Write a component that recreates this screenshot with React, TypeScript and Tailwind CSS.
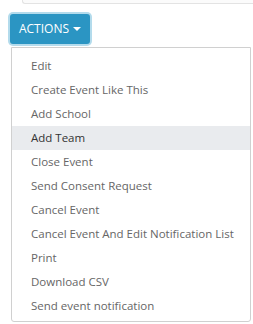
const items = [
  'Edit',
  'Create Event Like This',
  'Add School',
  'Add Team',
  'Close Event',
  'Send Consent Request',
  'Cancel Event',
  'Cancel Event And Edit Notification List',
  'Print',
  'Download CSV',
  'Send event notification',
];

function App() {
  const active = 'Add Team';

  return (
    <div className="relative h-[324px] w-[253px] overflow-hidden bg-white font-['Open_Sans',sans-serif]">
      <div className="ml-[22px] h-[4px] rounded-bl-[3px] border-b border-l border-[#e3e3e3] bg-[#fbfbfb]" />

      <div className="ml-[10px] mt-[10px] flex">
        <button className="flex h-[30px] w-[80px] items-center justify-center gap-[4px] rounded-[3px] bg-[#2b95c3] text-[12px] text-white shadow-[0_0_0_2px_#b3dbec]">
          ACTIONS
          <span className="h-0 w-0 border-x-[4px] border-t-[4px] border-x-transparent border-t-white" />
        </button>
      </div>

      <ul className="ml-[11px] mt-[3px] w-[240px] rounded-b-[3px] border border-[#d0d0d0] bg-white pt-[6px] pb-[3px]">
        {items.map((item) => (
          <li
            key={item}
            className={`flex h-[24px] items-center pl-[19px] text-[11.5px] ${
              item === active ? 'bg-[#e9ebee] text-[#333]' : 'text-[#666]'
            }`}
          >
            {item}
          </li>
        ))}
      </ul>
    </div>
  );
}

export default App;
